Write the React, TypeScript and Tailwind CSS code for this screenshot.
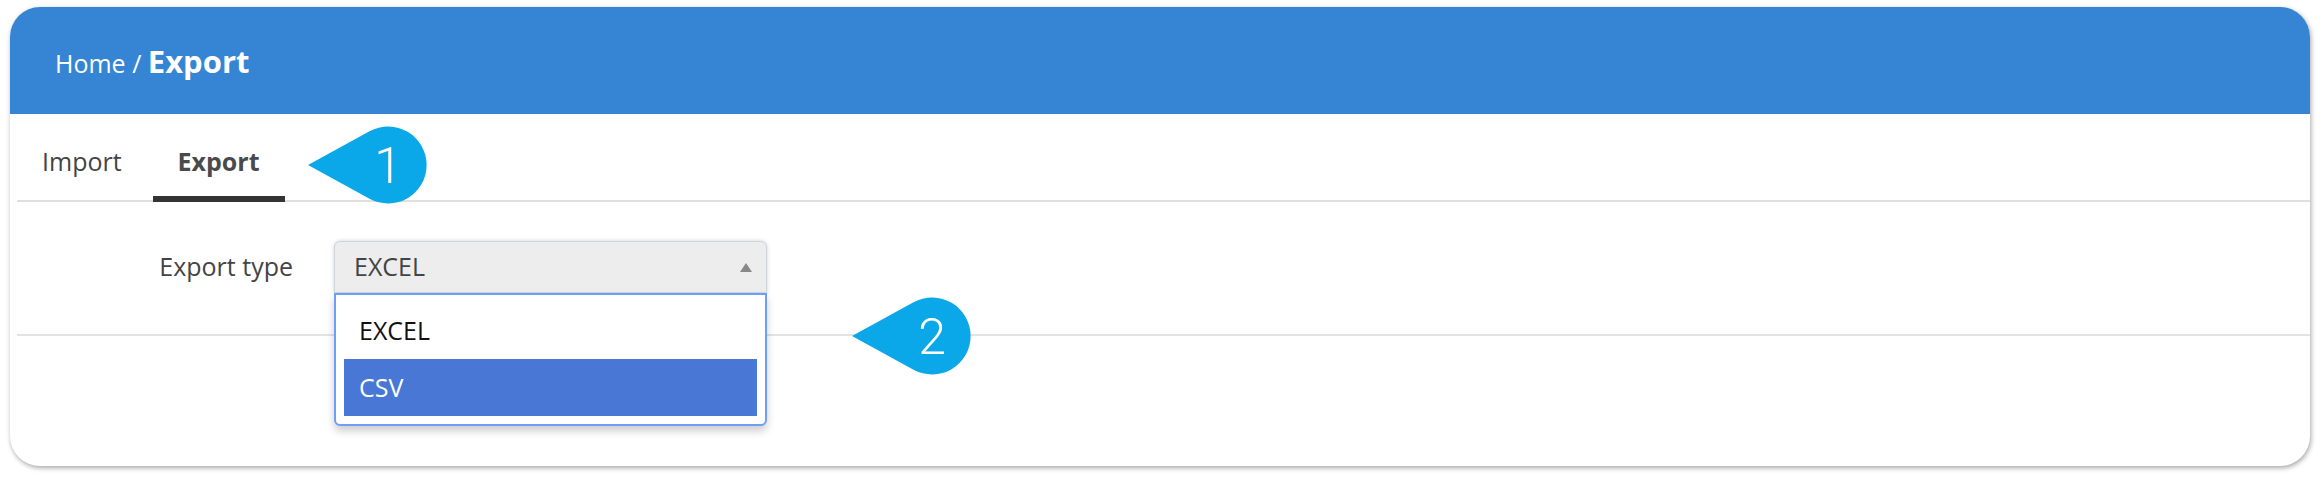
import { useState } from "react";

type Tab = "import" | "export";

const tabs: { id: Tab; label: string }[] = [
  { id: "import", label: "Import" },
  { id: "export", label: "Export" },
];

const options = ["EXCEL", "CSV"];

function Callout({ n, className }: { n: string; className: string }) {
  return (
    <svg width="120" height="78" viewBox="0 0 120 78" className={`absolute ${className}`}>
      <path d="M0 39 L61.5 5.3 A38.5 38.5 0 1 1 61.5 72.7 Z" fill="#0ba8e9" />
      <text
        x="80"
        y="40"
        textAnchor="middle"
        dominantBaseline="central"
        fill="#fff"
        style={{ fontFamily: "Roboto, sans-serif", fontWeight: 300, fontSize: 50 }}
      >
        {n}
      </text>
    </svg>
  );
}

export default function App() {
  const [tab, setTab] = useState<Tab>("export");
  const [value, setValue] = useState("EXCEL");
  const [hover, setHover] = useState("CSV");

  return (
    <div className="relative h-[478px] w-full bg-white pt-[7px] px-[10px] font-['Open_Sans',sans-serif] text-[#444]">
      <div className="h-[459px] rounded-[30px] overflow-hidden bg-white shadow-[1px_2px_5px_rgba(0,0,0,0.35)]">
        <header className="h-[107px] bg-[#3585d4] flex items-baseline pl-[45px] pt-[31px] text-white">
          <span className="text-[25px] whitespace-pre">Home / </span>
          <span className="text-[31px] font-bold">Export</span>
        </header>

        <nav className="ml-[7px] flex gap-[6px] border-b-2 border-[#e0e0e0]">
          {tabs.map((t) => (
            <button
              key={t.id}
              onClick={() => setTab(t.id)}
              className={`h-[88px] -mb-[2px] px-[25px] pt-[14px] flex items-center text-[25px] border-b-[6px] ${
                tab === t.id ? "font-bold border-[#333] text-[#4a4a4a]" : "border-transparent text-[#444]"
              }`}
            >
              {t.label}
            </button>
          ))}
        </nav>

        <section className="ml-[7px] h-[134px] border-b-2 border-[#e3e3e3] pt-[39px]">
          <div className="flex items-center gap-[41px]">
            <label className="w-[276px] text-right text-[25px] text-[#444]">Export type</label>
            <div className="relative w-[433px]">
              <div className="h-[52px] flex items-center justify-between pl-[19px] pr-[14px] bg-[#ededed] border border-[#cfd5da] rounded-t-[6px] shadow-[0_0_4px_rgba(0,0,0,0.18)] text-[25px] text-[#444]">
                <span>{value}</span>
                <svg width="12" height="9" viewBox="0 0 12 9">
                  <path d="M6 0 L12 9 L0 9 Z" fill="#888" />
                </svg>
              </div>
              <ul className="absolute left-0 top-full w-full z-10 bg-white border-2 border-[#6f9ef8] rounded-b-[6px] p-[8px] shadow-[0_5px_8px_rgba(0,0,0,0.2)]">
                {options.map((o) => (
                  <li
                    key={o}
                    onMouseEnter={() => setHover(o)}
                    onClick={() => setValue(o)}
                    className={`h-[56px] flex items-center px-[15px] text-[25px] ${
                      hover === o ? "bg-[#4877d6] text-white h-[57px]" : "text-[#111]"
                    }`}
                  >
                    {o}
                  </li>
                ))}
              </ul>
            </div>
          </div>
        </section>
      </div>

      <Callout n="1" className="left-[308px] top-[126px]" />
      <Callout n="2" className="left-[852px] top-[297px]" />
    </div>
  );
}
